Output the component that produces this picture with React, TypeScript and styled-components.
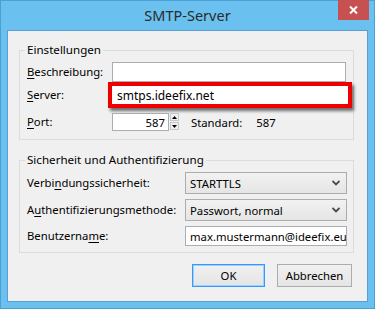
import React from 'react';
import styled, { createGlobalStyle } from 'styled-components';

const GlobalStyle = createGlobalStyle`
  html, body { margin: 0; padding: 0; }
  body {
    width: 375px;
    height: 309px;
    overflow: hidden;
    font-family: "Noto Sans", "Open Sans", sans-serif;
    font-size: 11.3px;
    color: #000;
  }
  * { box-sizing: border-box; }
`;

const Window = styled.div`
  width: 375px;
  height: 309px;
  background: #6ac1f0;
  border: 1px solid #4b9fd5;
  display: flex;
  flex-direction: column;
`;

const TitleBar = styled.div`
  height: 29px;
  display: grid;
  grid-template-columns: 1fr auto 1fr;
  align-items: start;
`;

const Title = styled.div`
  grid-column: 2;
  font-size: 14.5px;
  line-height: 28px;
  color: #2b2b2b;
`;

const CloseButton = styled.div`
  grid-column: 3;
  justify-self: end;
  width: 31px;
  height: 20px;
  margin-top: -1px;
  margin-right: 5px;
  background: #c75050;
  display: flex;
  align-items: center;
  justify-content: center;
`;

const Client = styled.div`
  flex: 1;
  margin: 0 6px 6px 6px;
  background: #f0f0f0;
  border: 1px solid #5a9ed2;
  padding: 11px 13px 0 11px;
  display: flex;
  flex-direction: column;
`;

const Group = styled.fieldset<{ $top?: number; $pb: number }>`
  margin: ${p => p.$top ?? 0}px 0 0 0;
  border: 1px solid #dcdcdc;
  padding: 4px 6px ${p => p.$pb}px 7px;
  min-width: 0;
`;

const Legend = styled.legend`
  margin-left: -2px;
  padding: 0 2px;
  line-height: 16px;
  font-size: 11.6px;
`;

const Row = styled.div<{ $h: number; $gap?: number }>`
  display: flex;
  align-items: center;
  height: ${p => p.$h}px;
  margin-top: ${p => p.$gap ?? 0}px;
`;

const Label = styled.div<{ $w: number }>`
  width: ${p => p.$w}px;
  flex-shrink: 0;
  white-space: nowrap;
  line-height: 16px;
`;

const Key = styled.span`
  text-decoration: underline;
  text-underline-offset: 2px;
`;

const TextBox = styled.div<{ $w: number; $h: number; $align?: string }>`
  width: ${p => p.$w}px;
  height: ${p => p.$h}px;
  background: #fff;
  border: 1px solid #abadb3;
  padding: 0 3px 0 4px;
  display: flex;
  align-items: center;
  justify-content: ${p => p.$align ?? 'flex-start'};
  white-space: nowrap;
  overflow: hidden;
`;

const Highlight = styled.div`
  margin-left: -4px;
  border: 4px solid #ee0000;
  box-shadow: 2px 3px 3px rgba(0, 0, 0, 0.55);
  display: flex;
`;

const PlainBox = styled(TextBox)`
  border: none;
  padding-left: 5px;
  font-size: 12px;
`;

const Spin = styled.div`
  display: flex;
  flex-direction: column;
  gap: 1px;
  margin-left: 1px;
  height: 18px;
`;

const SpinButton = styled.div`
  width: 9px;
  height: 8px;
  border: 1px solid #c8c8c8;
  background: #f0f0f0;
  display: flex;
  align-items: center;
  justify-content: center;
`;

const Note = styled.span<{ $ml: number }>`
  margin-left: ${p => p.$ml}px;
`;

const Select = styled.div`
  width: 162px;
  height: 22px;
  border: 1px solid #acacac;
  background: linear-gradient(#f2f2f2, #e5e5e5);
  padding: 0 6px 0 4px;
  display: flex;
  align-items: center;
  justify-content: space-between;
`;

const Buttons = styled.div`
  display: flex;
  justify-content: flex-end;
  gap: 12px;
  margin: 11px 2px 0 0;
`;

const Button = styled.div<{ $w: number; $default?: boolean }>`
  width: ${p => p.$w}px;
  height: 23px;
  border: 1px solid ${p => (p.$default ? '#3399ff' : '#acacac')};
  box-shadow: ${p => (p.$default ? 'inset 0 0 0 1px #9fd0ff' : 'none')};
  background: linear-gradient(#f0f0f0, #e5e5e5);
  display: flex;
  align-items: center;
  justify-content: center;
`;

const Chevron = () => (
  <svg width="8" height="6" viewBox="0 0 8 6">
    <path d="M0.5 1 L4 4.5 L7.5 1" fill="none" stroke="#4a4a4a" strokeWidth="1.8" />
  </svg>
);

const Arrow = ({ up }: { up?: boolean }) => (
  <svg width="5" height="3" viewBox="0 0 5 3">
    <path d={up ? 'M0 3 L2.5 0 L5 3 Z' : 'M0 0 L2.5 3 L5 0 Z'} fill="#000" />
  </svg>
);

export default function App() {
  return (
    <>
      <GlobalStyle />
      <Window>
        <TitleBar>
          <Title>SMTP-Server</Title>
          <CloseButton>
            <svg width="9" height="8" viewBox="0 0 9 8">
              <path d="M1 0.5 L8 7.5 M8 0.5 L1 7.5" stroke="#fff" strokeWidth="2" />
            </svg>
          </CloseButton>
        </TitleBar>
        <Client>
          <Group $pb={8}>
            <Legend>Einstellungen</Legend>
            <Row $h={20}>
              <Label $w={85}><Key>B</Key>eschreibung:</Label>
              <TextBox $w={234} $h={20} />
            </Row>
            <Row $h={26}>
              <Label $w={85}><Key>S</Key>erver:</Label>
              <Highlight>
                <PlainBox $w={236} $h={18}>smtps.ideefix.net</PlainBox>
              </Highlight>
            </Row>
            <Row $h={18} $gap={5}>
              <Label $w={85}><Key>P</Key>ort:</Label>
              <TextBox $w={57} $h={18} $align="flex-end">587</TextBox>
              <Spin>
                <SpinButton><Arrow up /></SpinButton>
                <SpinButton><Arrow /></SpinButton>
              </Spin>
              <Note $ml={12}>Standard:</Note>
              <Note $ml={14}>587</Note>
            </Row>
          </Group>
          <Group $top={12} $pb={6}>
            <Legend>Sicherheit und Authentifizierung</Legend>
            <Row $h={22}>
              <Label $w={158}>Verbi<Key>n</Key>dungssicherheit:</Label>
              <Select>STARTTLS<Chevron /></Select>
            </Row>
            <Row $h={22} $gap={5}>
              <Label $w={158}>A<Key>u</Key>thentifizierungsmethode:</Label>
              <Select>Passwort, normal<Chevron /></Select>
            </Row>
            <Row $h={20} $gap={5}>
              <Label $w={158}>Benutzerna<Key>m</Key>e:</Label>
              <TextBox $w={162} $h={20}>max.mustermann@ideefix.eu</TextBox>
            </Row>
          </Group>
          <Buttons>
            <Button $w={73} $default>OK</Button>
            <Button $w={75}>Abbrechen</Button>
          </Buttons>
        </Client>
      </Window>
    </>
  );
}
